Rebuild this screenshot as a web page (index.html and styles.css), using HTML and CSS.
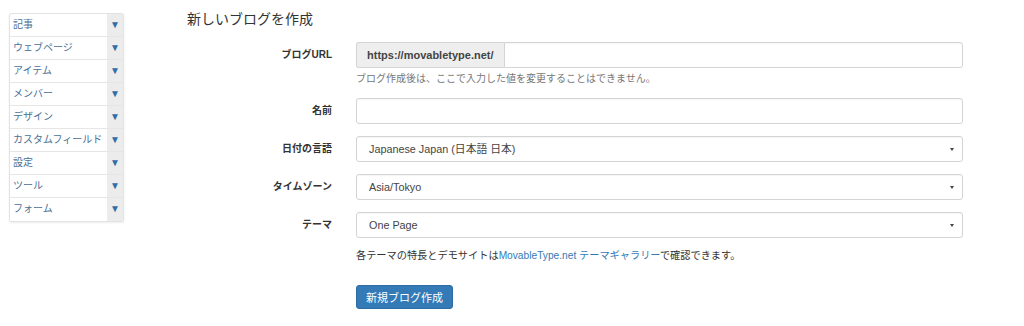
FILE: index.html
```html
<!DOCTYPE html>
<html lang="ja">
<head>
    <meta charset="UTF-8">
    <title>新しいブログを作成</title>
    <link rel="stylesheet" href="styles.css">
</head>
<body>
    <div class="page">
        <ul class="side-menu">
            <li><span class="menu-label">記事</span><span class="menu-caret">▼</span></li>
            <li><span class="menu-label">ウェブページ</span><span class="menu-caret">▼</span></li>
            <li><span class="menu-label">アイテム</span><span class="menu-caret">▼</span></li>
            <li><span class="menu-label">メンバー</span><span class="menu-caret">▼</span></li>
            <li><span class="menu-label">デザイン</span><span class="menu-caret">▼</span></li>
            <li><span class="menu-label">カスタムフィールド</span><span class="menu-caret">▼</span></li>
            <li><span class="menu-label">設定</span><span class="menu-caret">▼</span></li>
            <li><span class="menu-label">ツール</span><span class="menu-caret">▼</span></li>
            <li><span class="menu-label">フォーム</span><span class="menu-caret">▼</span></li>
        </ul>

        <div class="main">
            <h1>新しいブログを作成</h1>

            <form class="blog-form">
                <div class="form-row">
                    <label>ブログURL</label>
                    <div class="field">
                        <div class="input-group">
                            <span class="addon">https://movabletype.net/</span>
                            <div class="input grouped"></div>
                        </div>
                        <p class="help">ブログ作成後は、ここで入力した値を変更することはできません。</p>
                    </div>
                </div>

                <div class="form-row">
                    <label>名前</label>
                    <div class="field">
                        <div class="input"></div>
                    </div>
                </div>

                <div class="form-row">
                    <label>日付の言語</label>
                    <div class="field">
                        <div class="input select">Japanese Japan (日本語 日本)<span class="select-caret"></span></div>
                    </div>
                </div>

                <div class="form-row">
                    <label>タイムゾーン</label>
                    <div class="field">
                        <div class="input select">Asia/Tokyo<span class="select-caret"></span></div>
                    </div>
                </div>

                <div class="form-row">
                    <label>テーマ</label>
                    <div class="field">
                        <div class="input select">One Page<span class="select-caret"></span></div>
                        <p class="help theme-help">各テーマの特長とデモサイトは<a href="#">MovableType.net テーマギャラリー</a>で確認できます。</p>
                    </div>
                </div>

                <div class="form-row">
                    <label></label>
                    <div class="field">
                        <button type="button">新規ブログ作成</button>
                    </div>
                </div>
            </form>
        </div>
    </div>
</body>
</html>
```

FILE: styles.css
```css
body {
    margin: 0;
    font-family: 'Liberation Sans', 'Noto Sans CJK JP', sans-serif;
    font-size: 11px;
    color: #333;
    background-color: #fff;
}

.page {
    display: flex;
    align-items: flex-start;
    padding: 13px 0 0 9px;
}

.side-menu {
    list-style: none;
    margin: 0;
    padding: 0;
    width: 115px;
    box-sizing: border-box;
    border: 1px solid #e3e3e3;
    border-radius: 2px;
    box-shadow: 0 1px 2px rgba(0, 0, 0, 0.08);
}

.side-menu li {
    display: flex;
    height: 23px;
    border-bottom: 1px solid #e6e6e6;
    box-sizing: border-box;
}

.side-menu li:last-child {
    border-bottom: none;
}

.menu-label {
    flex: 1;
    padding-left: 3px;
    line-height: 22px;
    font-size: 10px;
    color: #4b6f94;
    white-space: nowrap;
    overflow: hidden;
}

.menu-caret {
    width: 16px;
    background-color: #ececec;
    color: #2f6ea8;
    font-size: 10px;
    line-height: 22px;
    text-align: center;
}

.main {
    margin-left: 63px;
    width: 776px;
}

h1 {
    margin: -2px 0 14px;
    font-size: 14px;
    font-weight: normal;
    color: #333;
    line-height: 17px;
}

.form-row {
    display: flex;
    align-items: flex-start;
    margin-bottom: 12px;
}

label {
    width: 145px;
    flex-shrink: 0;
    text-align: right;
    font-weight: bold;
    font-size: 10px;
    line-height: 26px;
    margin-right: 24px;
}

.field {
    flex: 1;
}

.input {
    height: 26px;
    box-sizing: border-box;
    border: 1px solid #d4d4d4;
    border-radius: 3px;
    background-color: #fff;
    box-shadow: inset 0 1px 1px rgba(0, 0, 0, 0.04);
    padding: 0 12px;
    line-height: 24px;
    font-size: 10.8px;
    color: #444;
}

.select {
    position: relative;
}

.select-caret {
    position: absolute;
    right: 8px;
    top: 11px;
    border-left: 2px solid transparent;
    border-right: 2px solid transparent;
    border-top: 3px solid #444;
}

.input-group {
    display: flex;
}

.addon {
    height: 26px;
    box-sizing: border-box;
    padding: 0 10px;
    line-height: 24px;
    font-weight: bold;
    font-size: 11px;
    background-color: #eee;
    border: 1px solid #d4d4d4;
    border-right: none;
    border-radius: 3px 0 0 3px;
    color: #444;
}

.grouped {
    flex: 1;
    border-radius: 0 3px 3px 0;
}

.help {
    margin: 4px 0 0;
    color: #777;
    font-size: 10px;
    line-height: 14px;
}

.theme-help {
    margin: 11px 0 4px;
    font-size: 10.2px;
    color: #333;
}

.theme-help a {
    color: #337ab7;
    text-decoration: none;
}

button {
    margin-top: 6px;
    background-color: #337ab7;
    color: #fff;
    border: 1px solid #2e6da4;
    border-radius: 3px;
    padding: 0 9px;
    height: 24px;
    font-family: inherit;
    font-size: 11px;
    cursor: pointer;
}
```
